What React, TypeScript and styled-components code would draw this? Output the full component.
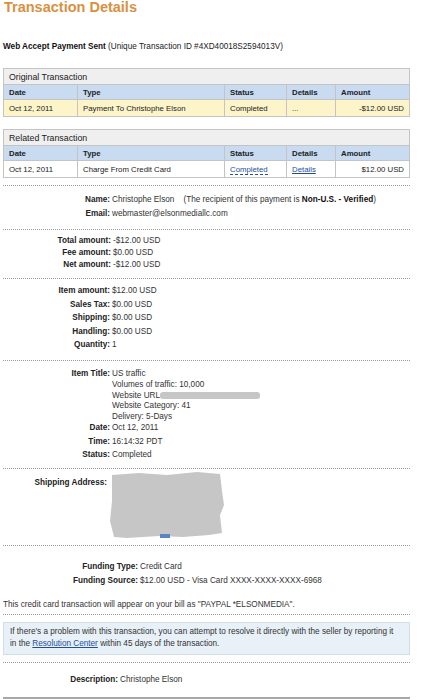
import styled, { createGlobalStyle } from "styled-components"

const Global = createGlobalStyle`
body{
    margin: 0;
    background: #fff;
    font-family: "Liberation Sans", Arial, sans-serif;
    font-size: 8.2px;
    color: #333;
}
`

const Page = styled.div`
width: 436px;
padding: 0 26px 0 3px;
box-sizing: border-box;
`

const Title = styled.h1`
margin: -1px 0 0 1px;
font-size: 14.5px;
line-height: 16px;
font-weight: bold;
color: #d9913f;
`

const Subtitle = styled.div`
margin: 27px 0 16px;
line-height: 10px;
color: #222;
b{ color: #111; }
`

const Table = styled.table<{ $gap: number }>`
width: 100%;
border-collapse: collapse;
margin-bottom: ${p => p.$gap}px;
border: 1px solid #c4c4c4;
td, th{
    border: 1px solid #c4c4c4;
    padding: 0 5px;
    text-align: left;
    font-size: 7.8px;
    color: #222;
}
`

const Caption = styled.th`
background: #efefef;
height: 15px;
font-weight: normal;
font-size: 8.8px !important;
`

const HeadRow = styled.tr`
background: #c8dbf0;
th{ height: 14px; font-weight: bold; }
`

const DataRow = styled.tr<{ $hl?: boolean }>`
background: ${p => p.$hl ? "#fdf5c9" : "#fff"};
td{ height: 16px; }
`

const Right = styled.td`
text-align: right !important;
`

const Link = styled.a<{ $dashed?: boolean }>`
color: #1d4f9c;
text-decoration: ${p => p.$dashed ? "none" : "underline"};
border-bottom: ${p => p.$dashed ? "1px dashed #1d4f9c" : "none"};
cursor: pointer;
`

const Section = styled.div<{ $label: number; $pad: string; $gap: number; $lh?: number }>`
display: grid;
grid-template-columns: ${p => p.$label}px 1fr;
column-gap: 2px;
row-gap: ${p => p.$gap}px;
padding: ${p => p.$pad};
line-height: ${p => p.$lh || 10}px;
border-top: 1px dotted #9a9a9a;
`

const Label = styled.div<{ $top?: number }>`
text-align: right;
font-weight: bold;
color: #222;
padding-top: ${p => p.$top || 0}px;
`

const Value = styled.div<{ $pull?: number }>`
color: #333;
margin-bottom: ${p => -(p.$pull || 0)}px;
b{ color: #111; }
`

const Redact = styled.span`
display: inline-block;
vertical-align: middle;
width: 100px;
height: 7px;
background: #c6c6c6;
border-radius: 3px;
filter: blur(0.6px);
`

const Note = styled.div`
padding: 8px 0 4px;
line-height: 10px;
color: #333;
`

const Separator = styled.div`
border-top: 1px dotted #9a9a9a;
padding: 7px 0;
`

const InfoBox = styled.div`
padding: 3px 14px 4px 6px;
background: #e8f0f8;
border: 1px solid #d3dde8;
line-height: 12px;
color: #333;
`

const Bottom = styled.div`
border-top: 2px solid #a8a8a8;
`

const Blob = () => (
    <svg width="116" height="68" viewBox="0 0 116 68">
        <path d="M3 4 L30 2 L58 4 L88 1 L111 3 L113 20 L115 34 L111 44 L113 62 L100 64 L74 66 L50 65 L18 67 L5 66 L1 50 L3 30 Z" fill="#c6c6c6" />
        <rect x="51" y="63" width="10" height="4" fill="#5b84c4" />
    </svg>
)

const cols = (
    <colgroup>
        <col style={{ width: 74 }} />
        <col style={{ width: 147 }} />
        <col style={{ width: 62 }} />
        <col style={{ width: 49 }} />
        <col />
    </colgroup>
)

export default function App() {
    return (
        <Page>
            <Global />
            <Title>Transaction Details</Title>
            <Subtitle><b>Web Accept Payment Sent</b> (Unique Transaction ID #4XD40018S2594013V)</Subtitle>

            <Table $gap={12}>
                {cols}
                <thead>
                    <tr><Caption colSpan={5}>Original Transaction</Caption></tr>
                    <HeadRow><th>Date</th><th>Type</th><th>Status</th><th>Details</th><th>Amount</th></HeadRow>
                </thead>
                <tbody>
                    <DataRow $hl><td>Oct 12, 2011</td><td>Payment To Christophe Elson</td><td>Completed</td><td>...</td><Right>-$12.00 USD</Right></DataRow>
                </tbody>
            </Table>

            <Table $gap={7}>
                {cols}
                <thead>
                    <tr><Caption colSpan={5}>Related Transaction</Caption></tr>
                    <HeadRow><th>Date</th><th>Type</th><th>Status</th><th>Details</th><th>Amount</th></HeadRow>
                </thead>
                <tbody>
                    <DataRow><td>Oct 12, 2011</td><td>Charge From Credit Card</td><td><Link $dashed>Completed</Link></td><td><Link>Details</Link></td><Right>$12.00 USD</Right></DataRow>
                </tbody>
            </Table>

            <Section $label={107} $pad="9px 0 10px" $gap={4}>
                <Label>Name:</Label>
                <Value>Christophe Elson &nbsp;&nbsp;&nbsp;(The recipient of this payment is <b>Non-U.S. - Verified</b>)</Value>
                <Label>Email:</Label>
                <Value>webmaster@elsonmediallc.com</Value>
            </Section>

            <Section $label={108} $pad="6px 0 8px" $gap={2}>
                <Label>Total amount:</Label>
                <Value>-$12.00 USD</Value>
                <Label>Fee amount:</Label>
                <Value>$0.00 USD</Value>
                <Label>Net amount:</Label>
                <Value>-$12.00 USD</Value>
            </Section>

            <Section $label={107} $pad="7px 0 10px" $gap={3.5}>
                <Label>Item amount:</Label>
                <Value>$12.00 USD</Value>
                <Label>Sales Tax:</Label>
                <Value>$0.00 USD</Value>
                <Label>Shipping:</Label>
                <Value>$0.00 USD</Value>
                <Label>Handling:</Label>
                <Value>$0.00 USD</Value>
                <Label>Quantity:</Label>
                <Value>1</Value>
            </Section>

            <Section $label={107} $pad="8px 0 7px" $gap={3} $lh={10.75}>
                <Label>Item Title:</Label>
                <Value $pull={3}>
                    US traffic<br />
                    Volumes of traffic: 10,000<br />
                    Website URL<Redact /><br />
                    Website Category: 41<br />
                    Delivery: 5-Days
                </Value>
                <Label>Date:</Label>
                <Value>Oct 12, 2011</Value>
                <Label>Time:</Label>
                <Value>16:14:32 PDT</Value>
                <Label>Status:</Label>
                <Value>Completed</Value>
            </Section>

            <Section $label={104} $pad="2px 0 6px" $gap={0}>
                <Label $top={7}>Shipping Address:</Label>
                <Blob />
            </Section>

            <Section $label={135} $pad="16px 0 6px" $gap={4}>
                <Label>Funding Type:</Label>
                <Value>Credit Card</Value>
                <Label>Funding Source:</Label>
                <Value>$12.00 USD - Visa Card XXXX-XXXX-XXXX-6968</Value>
            </Section>

            <Note>This credit card transaction will appear on your bill as "PAYPAL *ELSONMEDIA".</Note>

            <Separator>
                <InfoBox>
                    If there's a problem with this transaction, you can attempt to resolve it directly with the seller by reporting it in the <Link>Resolution Center</Link> within 45 days of the transaction.
                </InfoBox>
            </Separator>

            <Section $label={115} $pad="12px 0 12px" $gap={0}>
                <Label>Description:</Label>
                <Value>Christophe Elson</Value>
            </Section>
            <Bottom />
        </Page>
    )
}
